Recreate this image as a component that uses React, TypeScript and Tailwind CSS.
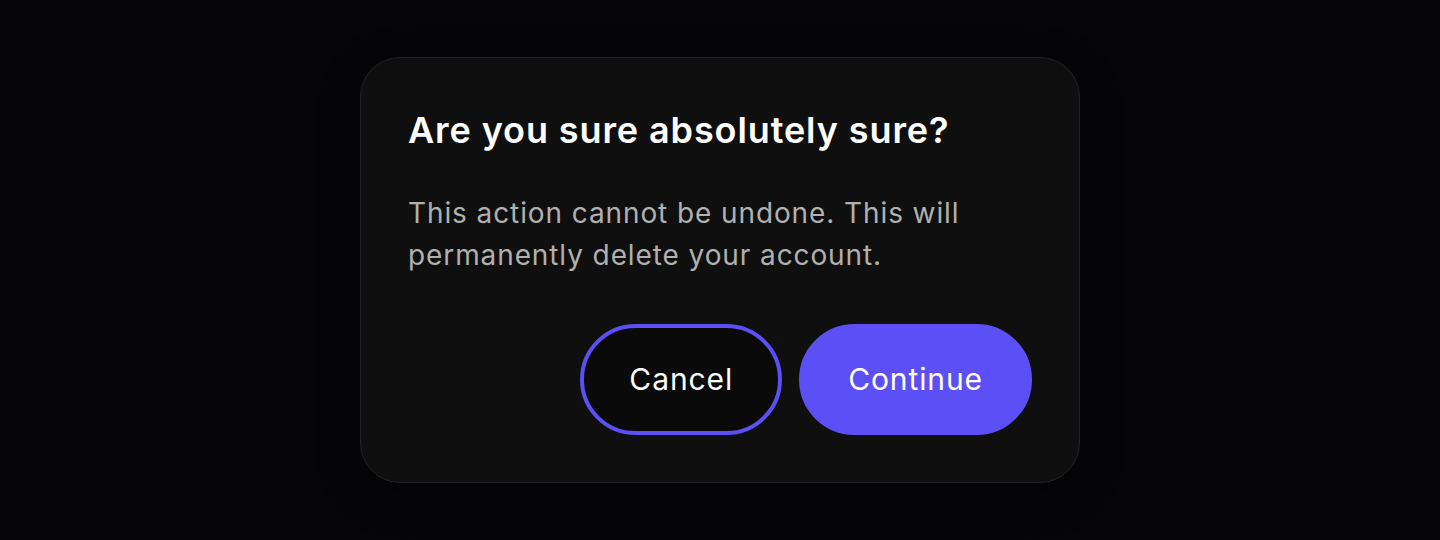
import React from 'react';

export default function App() {
    return (
        <div className="min-h-[540px] w-full bg-[#060609] flex items-start justify-center pt-[57px] font-['Inter',sans-serif]">
            <div className="w-[720px] rounded-[40px] border border-[#232323] bg-[#0f0f0f] px-[47px] pt-[50px] pb-[47px] shadow-[0_12px_40px_rgba(0,0,0,0.35)]">
                <h2 className="text-[36px] leading-[44px] font-semibold tracking-[0.9px] text-white">
                    Are you sure absolutely sure?
                </h2>
                <p className="mt-[40px] text-[28px] leading-[42px] tracking-[0.9px] text-[#b0b0b0]">
                    This action cannot be undone. This will permanently delete your account.
                </p>
                <div className="mt-[48px] flex justify-end gap-[17px]">
                    <button className="h-[111px] rounded-full border-4 border-[#5b4ff5] bg-[#0a0a0a] px-[45px] text-[30px] tracking-[0.9px] text-white">
                        Cancel
                    </button>
                    <button className="h-[111px] rounded-full border-4 border-[#5b4ff5] bg-[#5b4ff5] px-[45px] text-[30px] tracking-[0.9px] text-white">
                        Continue
                    </button>
                </div>
            </div>
        </div>
    );
}
